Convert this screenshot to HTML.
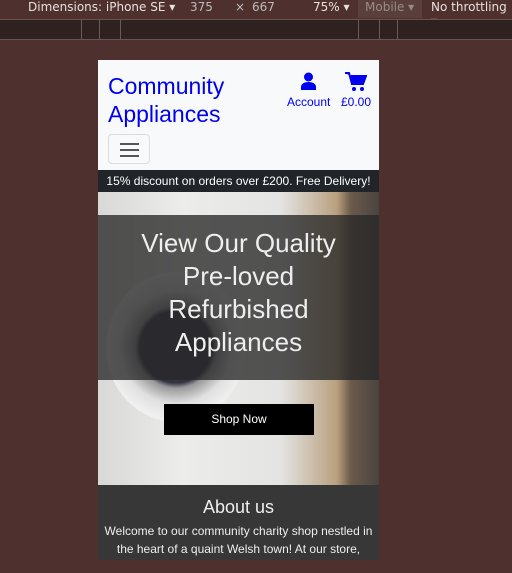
<!DOCTYPE html>
<html><head><style>
body{margin:0;width:512px;height:573px;background:#4e312e;font-family:"Liberation Sans",sans-serif;position:relative;overflow:hidden}
.tb{position:absolute;top:0;left:0;width:512px;height:19px;background:#4e312e;color:#e8e0de;font-size:12px;font-family:"DejaVu Sans","Liberation Sans",sans-serif}
.tb span{position:absolute;top:0}
.bar{position:absolute;top:19px;left:0;width:512px;height:19px;background:#2e2120;border-top:1px solid #6a5250;border-bottom:1px solid #6a5250}
.bar i{position:absolute;top:0;width:1px;height:19px;background:#6a5a58}
.pg{position:absolute;left:98px;top:60px;width:281px;height:500px;background:#f8f9fb;overflow:hidden}
.logo{position:absolute;left:10px;top:12px;color:#0000f0;font-size:23px;line-height:28px}
.ic{position:absolute;color:#0000f0;font-size:12px}
.tog{position:absolute;left:10px;top:74px;width:40px;height:28px;border:1px solid #dcdcdc;border-radius:4px}
.tog i{position:absolute;left:11px;width:19px;height:2px;background:#555}
.ban{position:absolute;top:110px;left:0;width:281px;height:22px;background:#212529;color:#fff;font-size:12px;text-align:center;line-height:22px}
.hero{position:absolute;top:132px;left:0;width:281px;height:368px;background:linear-gradient(90deg,#d8d8d6 0%,#ececea 30%,#e4e4e2 65%,#b9a080 85%,#6b5a4a 90%,#4a4440 100%)}
.ov{position:absolute;top:23px;left:0;width:281px;height:165px;background:rgba(40,40,40,.78);color:#eee;font-size:26px;line-height:33px;text-align:center;padding-top:12px;box-sizing:border-box}
.btn{position:absolute;left:66px;top:212px;width:150px;height:31px;background:#000;color:#fff;font-size:12px;text-align:center;line-height:31px}
.ab{position:absolute;top:293px;left:0;width:281px;height:75px;background:rgba(55,55,55,.9);color:#eee;text-align:center}
</style></head><body>
<div class="tb"><span style="left:28px">Dimensions: iPhone SE ▾</span><span style="left:190px;color:#bbb">375</span><span style="left:235px;color:#bbb">×</span><span style="left:252px;color:#bbb">667</span><span style="left:313px">75% ▾</span><span style="left:358px;width:64px;height:18px;background:#5a403c;color:#9a8a88;padding-left:7px;box-sizing:border-box">Mobile ▾</span><span style="left:431px">No throttling ▾</span></div>
<div class="bar"><i style="left:81px"></i><i style="left:99px"></i><i style="left:120px"></i><i style="left:358px"></i><i style="left:379px"></i><i style="left:397px"></i></div>
<div class="pg">
<div class="logo">Community<br>Appliances</div>
<svg style="position:absolute;left:202px;top:12px" width="17" height="18" viewBox="0 0 17 18"><circle cx="8.5" cy="5" r="4.5" fill="#0000f0"/><path d="M1 18v-3c0-3 3-5 7.5-5s7.5 2 7.5 5v3z" fill="#0000f0"/></svg>
<svg style="position:absolute;left:247px;top:12px" width="22" height="20" viewBox="0 0 22 20"><path d="M0 1h4l3 11h11l3-8H6" fill="#0000f0" stroke="#0000f0" stroke-width="2"/><circle cx="9" cy="17" r="2" fill="#0000f0"/><circle cx="17" cy="17" r="2" fill="#0000f0"/></svg>
<div class="ic" style="left:189px;top:35px">Account</div>
<div class="ic" style="left:243px;top:35px">£0.00</div>
<div class="tog"><i style="top:8px"></i><i style="top:14px"></i><i style="top:20px"></i></div>
<div class="ban">15% discount on orders over £200. Free Delivery!</div>
<div class="hero">
<div style="position:absolute;left:8px;top:80px;width:140px;height:150px;border-radius:50%;background:radial-gradient(circle,#334 0 35%,#999 40%,#e0e0e0 55%,#f0f0f0 70%)"></div>
<div style="position:absolute;left:0;top:293px;width:281px;height:75px;background:#333"></div>
<div class="ov">View Our Quality<br>Pre-loved<br>Refurbished<br>Appliances</div>
<div class="btn">Shop Now</div>
<div class="ab"><div style="font-size:18px;margin-top:12px">About us</div><div style="font-size:12px;line-height:18px;margin-top:4px">Welcome to our community charity shop nestled in the heart of a quaint Welsh town! At our store,</div></div>
</div>
</div>
</body></html>
